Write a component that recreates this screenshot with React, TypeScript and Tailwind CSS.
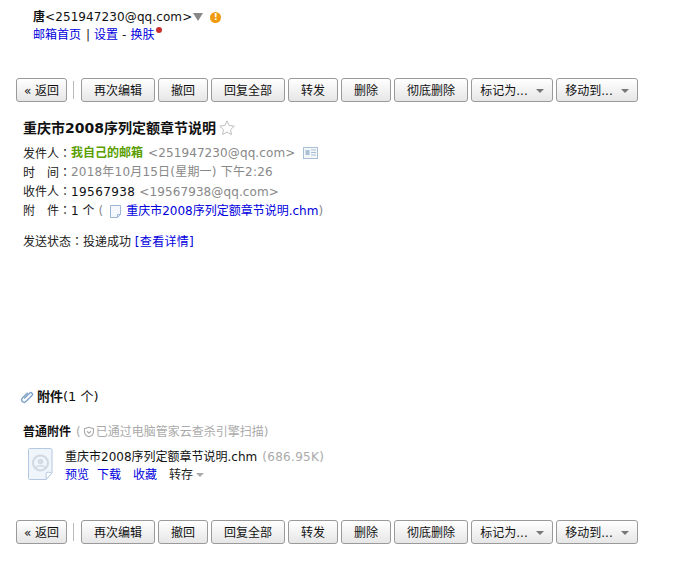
import React from 'react'

const font = { fontFamily: '"DejaVu Sans", "Noto Sans CJK SC", sans-serif' }

function ToolButton({ label, w, menu }: { label: string; w: string; menu?: boolean }) {
  return (
    <button className={`${w} h-6 pt-[2px] flex items-center justify-center gap-2 rounded-[3px] border border-[#9a9a9a] bg-gradient-to-b from-white to-[#e6e6e6] text-[12px] text-[#111] shrink-0`}>
      <span>{label}</span>
      {menu && <span className="w-0 h-0 border-x-[4px] border-x-transparent border-t-[4px] border-t-[#777]" />}
    </button>
  )
}

function Toolbar() {
  return (
    <div className="flex items-center h-6 pl-4">
      <ToolButton label="« 返回" w="w-[51px]" />
      <div className="w-px h-[18px] bg-[#bbb] ml-[6px] mr-[7px]" />
      <div className="flex gap-[3px]">
        <ToolButton label="再次编辑" w="w-[74px]" />
        <ToolButton label="撤回" w="w-[50px]" />
        <ToolButton label="回复全部" w="w-[74px]" />
        <ToolButton label="转发" w="w-[50px]" />
        <ToolButton label="删除" w="w-[50px]" />
        <ToolButton label="彻底删除" w="w-[74px]" />
        <ToolButton label="标记为..." w="w-[82px]" menu />
        <ToolButton label="移动到..." w="w-[82px]" menu />
      </div>
    </div>
  )
}

// 全角冒号在参考图里是居中的,用繁中字形
function Colon() {
  return <span className="[font-family:'Noto_Sans_CJK_TC',sans-serif]">：</span>
}

function MetaRow({ label, children }: { label: string; children: React.ReactNode }) {
  return (
    <div className="h-[19.3px] flex items-center whitespace-nowrap">
      <span className="text-[#222]">{label}<Colon /></span>
      {children}
    </div>
  )
}

export default function App() {
  return (
    <div className="w-[676px] h-[579px] bg-white text-[12px] leading-[18px] overflow-hidden" style={font}>
      <div className="pl-[33px] pt-[7px] h-[78px]">
        <div className="flex items-center h-[19px] text-[#111]">
          <b>唐</b>
          <span className="tracking-[0.1px]">&lt;251947230@qq.com&gt;</span>
          <span className="w-0 h-0 border-x-[5px] border-x-transparent border-t-[8px] border-t-[#888] ml-px" />
          <span className="ml-[7px] mt-[2px] w-[11px] h-[11px] rounded-full bg-[#f09a0e] text-white text-[9px] leading-[11px] text-center font-bold">!</span>
        </div>
        <div className="relative flex items-center h-[18px] w-fit">
          <a className="text-[#00d]">邮箱首页</a>
          <span className="ml-[5px] mr-[4px] text-[#222]">|</span>
          <a className="text-[#00d]">设置</a>
          <span className="mx-[4px] text-[#222]">-</span>
          <a className="text-[#00d]">换肤</a>
          <span className="absolute -right-[8px] top-[1px] w-[6px] h-[6px] rounded-full bg-[#c9302c]" />
        </div>
      </div>

      <Toolbar />

      <div className="pl-[23px] pt-[16px] h-[285px]">
        <div className="flex items-center h-[20px] text-[14px] font-bold text-[#111]">
          重庆市2008序列定额章节说明
          <svg width="18" height="18" viewBox="0 0 24 24" className="ml-[2px]" fill="none" stroke="#bdbdbd" strokeWidth="1.3">
            <path d="M12 2.5l2.9 6.2 6.8.8-5 4.6 1.3 6.7-6-3.4-6 3.4 1.3-6.7-5-4.6 6.8-.8z" />
          </svg>
        </div>
        <div className="mt-[5.4px]">
          <MetaRow label="发件人">
            <b className="text-[#5a9e00]">我自己的邮箱</b>
            <span className="text-[#888] ml-[5px] tracking-[0.1px]">&lt;251947230@qq.com&gt;</span>
            <svg width="15" height="12" viewBox="0 0 15 12" className="ml-2">
              <rect x="0.5" y="0.5" width="14" height="11" fill="#f4f7fa" stroke="#a9bfd6" />
              <rect x="2.5" y="3" width="4" height="5" fill="#a9bfd6" />
              <path d="M8 3h5M8 5.5h5M8 8h5" stroke="#a9bfd6" />
            </svg>
          </MetaRow>
          <MetaRow label="时　间">
            <span className="text-[#888] tracking-[0.2px]">2018年10月15日(星期一) 下午2:26</span>
          </MetaRow>
          <MetaRow label="收件人">
            <span className="text-[#111] tracking-[0.4px]">19567938</span>
            <span className="text-[#888] ml-[4px] tracking-[0.1px]">&lt;19567938@qq.com&gt;</span>
          </MetaRow>
          <MetaRow label="附　件">
            <span className="text-[#111]">1 个</span>
            <span className="text-[#888] ml-1">(</span>
            <svg width="13" height="15" viewBox="0 0 13 15" className="ml-[6px] mr-[4px] mt-[2px]">
              <path d="M1.5 1.5h10v9l-3 3h-7z" fill="#f4f8fc" stroke="#9db8d6" />
              <path d="M11.5 10.5h-3v3" fill="none" stroke="#9db8d6" />
            </svg>
            <a className="text-[#00d]">重庆市2008序列定额章节说明.chm</a>
            <span className="text-[#888]">)</span>
          </MetaRow>
        </div>
        <div className="mt-[11.6px] text-[#222] whitespace-nowrap">
          发送状态<Colon />投递成功 <a className="text-[#00d] tracking-[0.3px]">[查看详情]</a>
        </div>
      </div>

      <div className="pl-[20px] flex items-center h-[19px] text-[13px]">
        <svg width="14" height="14" viewBox="0 0 14 14" fill="none" stroke="#7fa2c8" strokeWidth="1.4" className="mr-[3px]">
          <g transform="rotate(45 7 7)">
            <path d="M4.5 3.5v7.5a2.5 2.5 0 0 0 5 0V2.5a1.7 1.7 0 0 0-3.4 0v7.5" />
          </g>
        </svg>
        <b className="text-[#111]">附件</b>
        <span className="text-[#111]">(1 个)</span>
      </div>

      <div className="pl-[23px] mt-[16px] flex items-center h-[19px] whitespace-nowrap">
        <b className="text-[#111]">普通附件</b>
        <span className="ml-[5px] text-[#aaa] flex items-center">
          (
          <svg width="12" height="12" viewBox="0 0 24 24" fill="none" stroke="#aaa" strokeWidth="2.2" className="ml-[2px] mr-px">
            <path d="M12 2.5l9 3v6c0 5-3.6 8.4-9 10-5.4-1.6-9-5-9-10v-6z" />
            <path d="M8 10.5l4 4 4-4" />
          </svg>
          已通过电脑管家云查杀引擎扫描)
        </span>
      </div>

      <div className="pl-[28px] mt-[6px] flex h-[45px]">
        <svg width="25" height="32" viewBox="0 0 25 32" className="mt-[1px]">
          <path d="M1.5 0.5h21a1.5 1.5 0 0 1 1.5 1.5v23l-6 6.5h-16.500a1 1 0 0 1-1-1v-29a1 1 0 0 1 1-1z" fill="#f0f4fb" stroke="#b4c8e2" />
          <circle cx="12.500" cy="15" r="7.500" fill="none" stroke="#d0d8e0" strokeWidth="2" />
          <circle cx="12.500" cy="13.500" r="2.800" fill="#d4dbe2" />
          <path d="M7.500 20c1.500-3 8.500-3 10 0" fill="none" stroke="#d4dbe2" strokeWidth="1.500" />
          <path d="M24 25c-2-1-5-1-6 0 .5 2 0 4.500 0 6.500z" fill="#fff" stroke="#b4c8e2" />
        </svg>
        <div className="ml-3 whitespace-nowrap">
          <div className="h-[19px] flex items-center">
            <span className="text-[#111]">重庆市2008序列定额章节说明.chm</span>
            <span className="text-[#aaa] ml-[5px] tracking-[0.3px]">(686.95K)</span>
          </div>
          <div className="h-[18px] flex items-center">
            <a className="text-[#00d]">预览</a>
            <a className="text-[#00d] ml-2">下载</a>
            <a className="text-[#00d] ml-3">收藏</a>
            <span className="text-[#222] ml-3">转存</span>
            <span className="ml-[3px] w-0 h-0 border-x-[4px] border-x-transparent border-t-[4px] border-t-[#aaa]" />
          </div>
        </div>
      </div>

      <div className="mt-[28px]">
        <Toolbar />
      </div>
    </div>
  )
}
